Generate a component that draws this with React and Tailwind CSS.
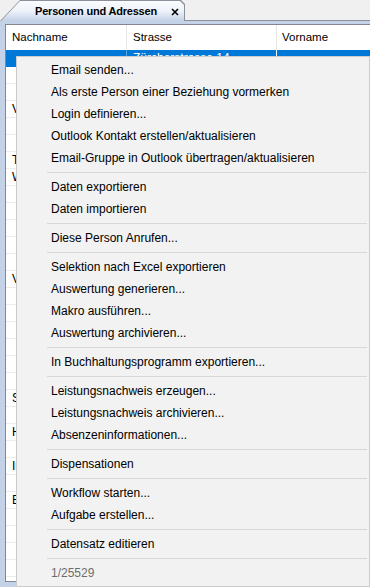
import React from 'react';

const menu = [
  'Email senden...',
  'Als erste Person einer Beziehung vormerken',
  'Login definieren...',
  'Outlook Kontakt erstellen/aktualisieren',
  'Email-Gruppe in Outlook übertragen/aktualisieren',
  null,
  'Daten exportieren',
  'Daten importieren',
  null,
  'Diese Person Anrufen...',
  null,
  'Selektion nach Excel exportieren',
  'Auswertung generieren...',
  'Makro ausführen...',
  'Auswertung archivieren...',
  null,
  'In Buchhaltungsprogramm exportieren...',
  null,
  'Leistungsnachweis erzeugen...',
  'Leistungsnachweis archivieren...',
  'Absenzeninformationen...',
  null,
  'Dispensationen',
  null,
  'Workflow starten...',
  'Aufgabe erstellen...',
  null,
  'Datensatz editieren',
  null,
];

// only the first letter of these rows peeks out left of the menu
const names = { 3: 'Vogel', 6: 'Tanner', 7: 'Weber', 13: 'Villiger', 20: 'Schmid', 22: 'Huber', 24: 'Imhof', 26: 'Egli' };

function Row({ i }) {
  const sel = i === 0;
  return (
    <div className={`flex h-[17px] shrink-0 border-b ${sel ? 'bg-[#0078d7] border-[#0078d7] text-white' : 'border-[#ececec] text-black'}`}>
      <div className={`w-[121px] pl-[6px] leading-[16px] whitespace-nowrap overflow-hidden border-r ${sel ? 'border-[#5aa5e6]' : 'border-transparent'}`}>
        {names[i] || ''}
      </div>
      <div className={`w-[150px] pl-[6px] leading-[16px] whitespace-nowrap overflow-hidden border-r ${sel ? 'border-white' : 'border-transparent'}`}>
        {sel ? 'Zürcherstrasse 14' : ''}
      </div>
      <div className="flex-1 pl-[6px] leading-[16px]" />
    </div>
  );
}

export default function App() {
  return (
    <div className="relative w-[370px] h-[587px] overflow-hidden bg-[#f0f0f0] font-['Liberation_Sans',Arial,sans-serif] text-[12px] text-black">
      {/* tab strip */}
      <div className="flex items-end h-[21px]">
        <div className="w-[185px] h-[21px] shrink-0 bg-[#8b8f99] pt-px pr-px [clip-path:polygon(0_100%,20px_0,181px_0,185px_4px,185px_100%)]">
          <div className="h-full flex items-center pl-[35px] bg-gradient-to-b from-[#fbfcfe] via-[#eef2f9] to-[#c4d2e8] [clip-path:polygon(1px_100%,20px_0,calc(100%-4px)_0,100%_4px,100%_100%)]">
            <span className="font-bold text-[11px] tracking-[-0.2px] leading-none">Personen und Adressen</span>
            <svg width="8" height="8" viewBox="0 0 8 8" className="ml-[14px] mt-[2px]">
              <path d="M1 1 L7 7 M7 1 L1 7" stroke="#000" strokeWidth="1.6" />
            </svg>
          </div>
        </div>
        <div className="flex-1 h-full border-b border-[#8b8f99]" />
      </div>

      {/* frame + grid */}
      <div className="h-[566px] bg-[#c4d2e8] pl-[5px] pt-[3px] pb-[5px]">
        <div className="h-full bg-white border-l border-t border-b border-[#828790] overflow-hidden flex flex-col">
          <div className="flex h-[25px] shrink-0 text-[11.5px]">
            <div className="w-[121px] pl-[6px] flex items-center border-r border-[#e5e5e5]">Nachname</div>
            <div className="w-[150px] pl-[6px] flex items-center border-r border-[#e5e5e5]">Strasse</div>
            <div className="flex-1 pl-[5px] flex items-center">Vorname</div>
          </div>
          {Array.from({ length: 32 }, (_, i) => (
            <Row key={i} i={i} />
          ))}
        </div>
      </div>

      {/* context menu */}
      <div className="absolute left-[16px] top-[56px] w-[354px] h-[531px] bg-[#f2f2f2] border border-[#cccccc] pt-[2px]">
        {menu.map((m, i) =>
          m === null ? (
            <div key={i} className="h-[7px] pt-[3px] ml-[30px] mr-[2px]">
              <div className="h-px bg-[#d7d7d7]" />
            </div>
          ) : (
            <div key={i} className="h-[22px] leading-[22px] pl-[34px] whitespace-nowrap">
              {m}
            </div>
          )
        )}
        <div className="h-[22px] leading-[22px] pl-[34px] text-[#6d6d6d]">1/25529</div>
      </div>
    </div>
  );
}
